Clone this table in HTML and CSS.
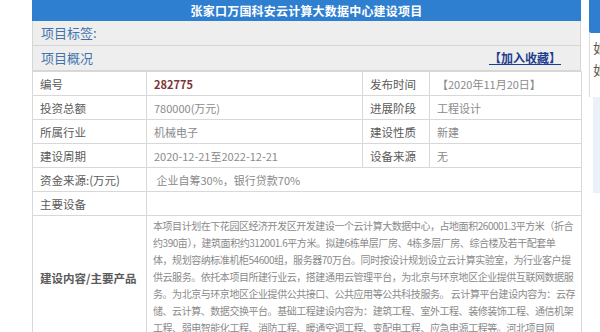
FILE: index.html
```html
<!DOCTYPE html>
<html lang="zh">
<head>
<meta charset="utf-8">
<link rel="stylesheet" href="styles.css">
</head>
<body>
<div class="page">
  <div class="main">
    <div class="title">张家口万国科安云计算大数据中心建设项目</div>
    <div class="bar">项目标签:</div>
    <div class="bar bar-split">
      <span>项目概况</span>
      <a class="fav" href="#">【加入收藏】</a>
    </div>
    <table class="info">
      <colgroup>
        <col class="c1"><col class="c2"><col class="c3"><col class="c4">
      </colgroup>
      <tr>
        <td class="lbl">编号</td>
        <td class="val num">282775</td>
        <td class="lbl">发布时间</td>
        <td class="val">【2020年11月20日】</td>
      </tr>
      <tr>
        <td class="lbl">投资总额</td>
        <td class="val">780000(万元)</td>
        <td class="lbl">进展阶段</td>
        <td class="val">工程设计</td>
      </tr>
      <tr>
        <td class="lbl">所属行业</td>
        <td class="val">机械电子</td>
        <td class="lbl">建设性质</td>
        <td class="val">新建</td>
      </tr>
      <tr>
        <td class="lbl">建设周期</td>
        <td class="val">2020-12-21至2022-12-21</td>
        <td class="lbl">设备来源</td>
        <td class="val">无</td>
      </tr>
      <tr>
        <td class="lbl">资金来源:(万元)</td>
        <td class="val" colspan="3">&nbsp;企业自筹30%，银行贷款70%</td>
      </tr>
      <tr>
        <td class="lbl">主要设备</td>
        <td class="val" colspan="3"></td>
      </tr>
      <tr class="big">
        <td class="lbl strong">建设内容/主要产品</td>
        <td class="val desc" colspan="3">本项目计划在下花园区经济开发区开发建设一个云计算大数据中心，占地面积260001.3平方米（折合<br>约390亩），建筑面积约312001.6平方米。拟建6栋单层厂房、4栋多层厂房、综合楼及若干配套单<br>体，规划容纳标准机柜54600组，服务器70万台。同时按设计规划设立云计算实验室，为行业客户提<br>供云服务。依托本项目所建行业云，搭建通用云管理平台，为北京与环京地区企业提供互联网数据服<br>务。为北京与环京地区企业提供公共接口、公共应用等公共科技服务。 云计算平台建设内容为：云存<br>储、云计算、数据交换平台。基础工程建设内容为：建筑工程、室外工程、装修装饰工程、通信机架<br>工程、弱电智能化工程、消防工程、暖通空调工程、变配电工程、应急电源工程等。河北项目网</td>
      </tr>
    </table>
  </div>
  <div class="side">
    <div class="side-tab"></div>
    <div class="side-box">
      <div class="side-line">如</div>
      <div class="side-line">如</div>
    </div>
    <div class="side-light"></div>
  </div>
</div>
</body>
</html>
```

FILE: styles.css
```css
html, body {
  margin: 0;
  padding: 0;
  background: #ffffff;
}
body {
  font-family: "Noto Sans CJK SC", "Liberation Sans", sans-serif;
  color: #666;
}
.page {
  display: flex;
  align-items: flex-start;
  width: 600px;
  height: 332px;
  overflow: hidden;
}
.main {
  margin-left: 32px;
  width: 549px;
  flex: none;
}
.title {
  height: 21px;
  line-height: 21px;
  background: #2f7fd1;
  color: #fff;
  font-weight: bold;
  font-size: 12px;
  text-align: center;
  letter-spacing: 0.2px;
}
.bar {
  height: 24px;
  line-height: 24px;
  background: #eeeeee;
  border: 1px solid #d6d6d6;
  border-top: none;
  padding-left: 8px;
  font-size: 13px;
  color: #3f73ad;
}
.bar-split {
  display: flex;
  justify-content: space-between;
  padding-right: 19px;
}
.fav {
  color: #1f3d8f;
  font-weight: bold;
  font-size: 12px;
  text-decoration: underline;
}
.info {
  width: 549px;
  border-collapse: collapse;
  table-layout: fixed;
}
.c1 { width: 114px; }
.c2 { width: 216px; }
.c3 { width: 67px; }
.c4 { width: 152px; }
.info td {
  border: 1px solid #d8d8d8;
  height: 23px;
  padding: 0 0 0 7px;
  font-size: 11px;
  vertical-align: middle;
  white-space: nowrap;
  overflow: hidden;
}
.lbl {
  color: #5a5a5a;
}
.info td.lbl {
  font-size: 11.5px;
}
.val {
  color: #8a8a8a;
}
.num {
  color: #7a3434;
  font-weight: bold;
}
.strong {
  font-weight: bold;
}
.info td.desc {
  font-size: 10px;
  letter-spacing: -0.45px;
  line-height: 17px;
  padding: 1px 0 4px 6px;
  color: #8a8a8a;
  vertical-align: top;
}
.side {
  margin-left: 8px;
  flex: 1;
  display: flex;
  flex-direction: column;
}
.side-tab {
  height: 33px;
  background: #2f7fd1;
  border-bottom-left-radius: 2px;
}
.side-box {
  height: 60px;
  border-left: 1px solid #dcdcdc;
  padding: 4px 0 0 3px;
}
.side-line {
  font-size: 13px;
  line-height: 22px;
  color: #555;
}
.side-light {
  height: 96px;
  margin-left: 4px;
  background: #eaf1f8;
}
```
